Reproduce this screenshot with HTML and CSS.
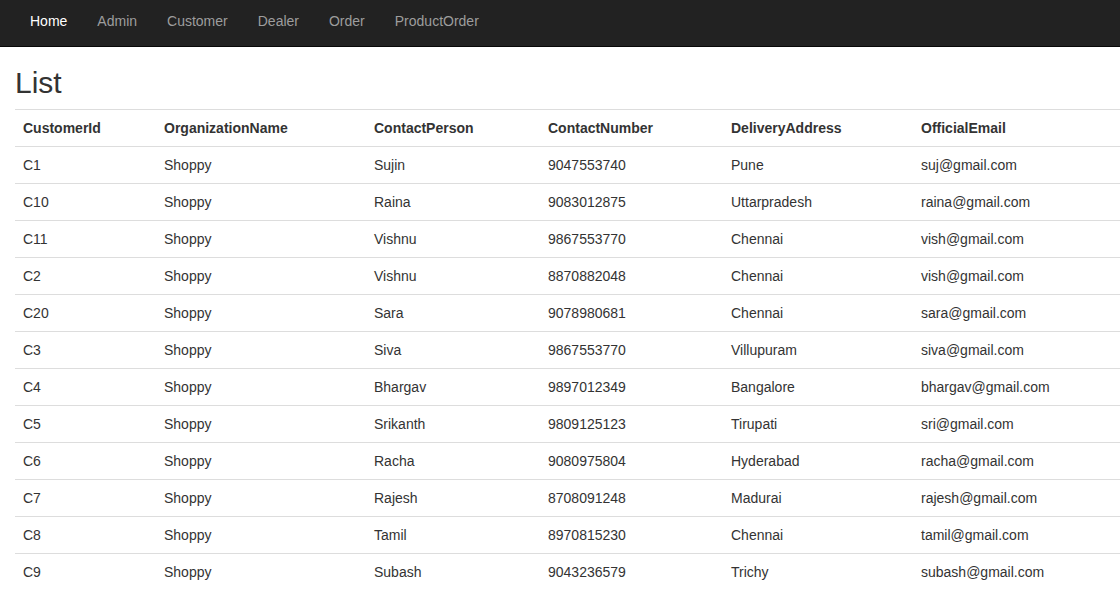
FILE: index.html
```html
<!DOCTYPE html>
<html>
<head>
<meta charset="utf-8">
<title>List</title>
<link rel="stylesheet" href="styles.css">
</head>
<body>
<nav class="navbar">
  <ul class="nav">
    <li class="active"><a href="#">Home</a></li>
    <li><a href="#">Admin</a></li>
    <li><a href="#">Customer</a></li>
    <li><a href="#">Dealer</a></li>
    <li><a href="#">Order</a></li>
    <li><a href="#">ProductOrder</a></li>
  </ul>
</nav>
<main class="container">
  <h2 class="title">List</h2>
  <table class="table">
    <thead>
      <tr>
        <th class="c1">CustomerId</th>
        <th class="c2">OrganizationName</th>
        <th class="c3">ContactPerson</th>
        <th class="c4">ContactNumber</th>
        <th class="c5">DeliveryAddress</th>
        <th class="c6">OfficialEmail</th>
      </tr>
    </thead>
    <tbody>
      <tr><td>C1</td><td>Shoppy</td><td>Sujin</td><td>9047553740</td><td>Pune</td><td>suj@gmail.com</td></tr>
      <tr><td>C10</td><td>Shoppy</td><td>Raina</td><td>9083012875</td><td>Uttarpradesh</td><td>raina@gmail.com</td></tr>
      <tr><td>C11</td><td>Shoppy</td><td>Vishnu</td><td>9867553770</td><td>Chennai</td><td>vish@gmail.com</td></tr>
      <tr><td>C2</td><td>Shoppy</td><td>Vishnu</td><td>8870882048</td><td>Chennai</td><td>vish@gmail.com</td></tr>
      <tr><td>C20</td><td>Shoppy</td><td>Sara</td><td>9078980681</td><td>Chennai</td><td>sara@gmail.com</td></tr>
      <tr><td>C3</td><td>Shoppy</td><td>Siva</td><td>9867553770</td><td>Villupuram</td><td>siva@gmail.com</td></tr>
      <tr><td>C4</td><td>Shoppy</td><td>Bhargav</td><td>9897012349</td><td>Bangalore</td><td>bhargav@gmail.com</td></tr>
      <tr><td>C5</td><td>Shoppy</td><td>Srikanth</td><td>9809125123</td><td>Tirupati</td><td>sri@gmail.com</td></tr>
      <tr><td>C6</td><td>Shoppy</td><td>Racha</td><td>9080975804</td><td>Hyderabad</td><td>racha@gmail.com</td></tr>
      <tr><td>C7</td><td>Shoppy</td><td>Rajesh</td><td>8708091248</td><td>Madurai</td><td>rajesh@gmail.com</td></tr>
      <tr><td>C8</td><td>Shoppy</td><td>Tamil</td><td>8970815230</td><td>Chennai</td><td>tamil@gmail.com</td></tr>
      <tr><td>C9</td><td>Shoppy</td><td>Subash</td><td>9043236579</td><td>Trichy</td><td>subash@gmail.com</td></tr>
    </tbody>
  </table>
</main>
</body>
</html>
```
FILE: styles.css
```css
* { box-sizing: border-box; }
html, body { margin: 0; padding: 0; }
body {
  font-family: "Liberation Sans", Arial, sans-serif;
  font-size: 14px;
  line-height: 20px;
  color: #333;
  background: #fff;
}
.navbar {
  background: #222;
  border-bottom: 1px solid #080808;
  height: 47px;
  padding: 0 15px;
}
.nav {
  list-style: none;
  margin: 0;
  padding: 0;
  display: flex;
}
.nav a {
  display: block;
  padding: 11px 15px 15px;
  color: #9d9d9d;
  text-decoration: none;
}
.nav .active a { color: #fff; }
.container {
  padding: 0 0 0 15px;
}
.title {
  font-size: 30px;
  font-weight: 500;
  line-height: 33px;
  margin: 19px 0 10px;
}
.table {
  width: 100%;
  border-collapse: collapse;
  border-spacing: 0;
}
.table th, .table td {
  padding: 8px;
  text-align: left;
  border-top: 1px solid #ddd;
  vertical-align: top;
}
.table th { font-weight: bold; }
.c1 { width: 141px; }
.c2 { width: 210px; }
.c3 { width: 174px; }
.c4 { width: 183px; }
.c5 { width: 190px; }
```
